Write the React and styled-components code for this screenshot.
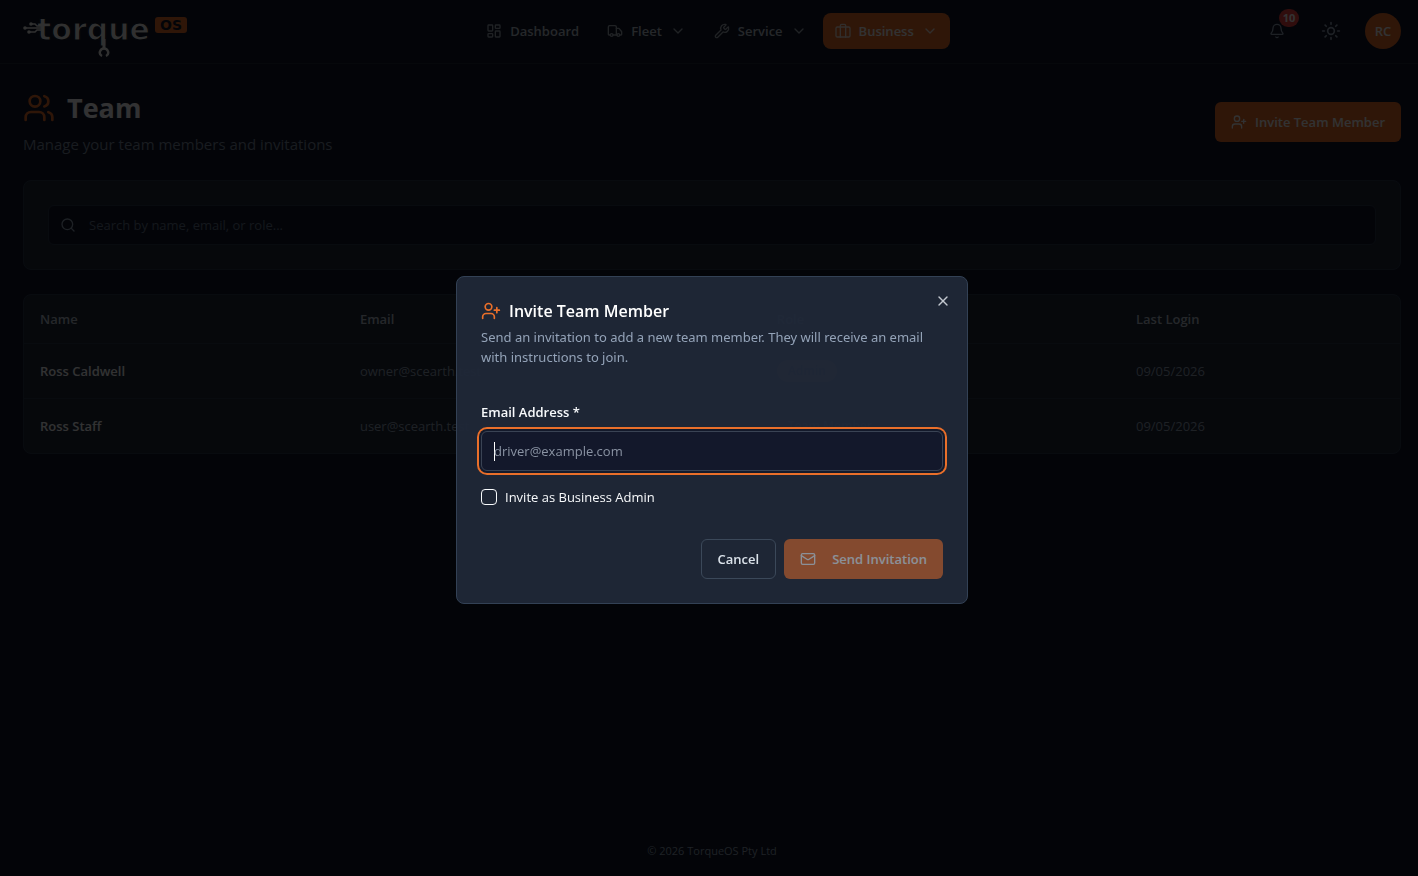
import React, { useState } from 'react'
import styled, { createGlobalStyle, ThemeProvider } from 'styled-components'
import {
  Bell,
  ChevronDown,
  LayoutDashboard,
  Mail,
  Search,
  Sun,
  Truck,
  UserPlus,
  Users,
  Wrench,
  X
} from 'lucide-react'

const theme = {
  page: '#0f172a',
  card: '#1e293b',
  line: '#2c394d',
  orange: '#ea6f2a',
  text: '#f8fafc',
  soft: '#b9c2cf',
  muted: '#94a3b8',
  dim: '#7c8a9f'
}

const GlobalStyle = createGlobalStyle`
  * {
    box-sizing: border-box;
  }
  body {
    margin: 0;
    background: ${ theme.page };
    color: ${ theme.text };
    font-family: 'Open Sans', 'Noto Sans', sans-serif;
    font-size: 13px;
    line-height: 20px;
  }
  button, input {
    font: inherit;
    color: inherit;
  }
  button {
    cursor: pointer;
  }
`

const PageWrapper = styled.div`
  display: flex;
  flex-direction: column;
  min-height: 100vh;
`

const HeaderWrapper = styled.header`
  display: grid;
  grid-template-columns: 1fr auto 1fr;
  align-items: center;
  height: 64px;
  padding: 0 17px 2px 23px;
  border-bottom: 1px solid ${ props => props.theme.card };
`

const LogoLink = styled.a`
  display: flex;
  width: 168px;
  svg {
    display: block;
  }
`

const NavWrapper = styled.nav`
  display: flex;
  gap: 4px;
`

const NavButton = styled.button`
  display: flex;
  align-items: center;
  gap: 8px;
  height: 36px;
  padding: 0 12px;
  border: 0;
  border-radius: 8px;
  font-weight: 600;
  color: ${ props => props.$active ? props.theme.text : props.theme.soft };
  background: ${ props => props.$active ? props.theme.orange : 'transparent' };
  svg {
    opacity: 0.85;
  }
`

const HeaderActions = styled.div`
  display: flex;
  justify-content: flex-end;
  align-items: center;
  gap: 14px;
`

const IconButton = styled.button`
  position: relative;
  display: flex;
  align-items: center;
  justify-content: center;
  width: 40px;
  height: 40px;
  padding: 0;
  border: 0;
  background: none;
  color: ${ props => props.theme.muted };
`

const CountBadge = styled.span`
  position: absolute;
  top: -2px;
  right: -2px;
  width: 20px;
  height: 18px;
  border-radius: 9px;
  background: #ef4444;
  color: #fff;
  font-size: 11px;
  font-weight: 700;
  line-height: 18px;
`

const Avatar = styled.button`
  width: 36px;
  height: 36px;
  padding: 0;
  border: 0;
  border-radius: 50%;
  background: ${ props => props.theme.orange };
  color: ${ props => props.theme.text };
  font-weight: 600;
`

const MainWrapper = styled.main`
  display: flex;
  flex-direction: column;
  flex: 1;
  gap: 24px;
  padding: 24px 17px 24px 23px;
`

const TitleRow = styled.div`
  display: flex;
  align-items: center;
  justify-content: space-between;
`

const PageTitle = styled.h1`
  display: flex;
  align-items: center;
  gap: 12px;
  margin: 0 0 4px;
  font-size: 27px;
  font-weight: 700;
  line-height: 40px;
  svg {
    color: ${ props => props.theme.orange };
  }
`

const SubTitle = styled.p`
  margin: 0;
  font-size: 15px;
  line-height: 24px;
  color: ${ props => props.theme.dim };
`

const ActionButton = styled.button`
  display: flex;
  align-items: center;
  justify-content: center;
  gap: ${ props => props.$wide ? '16px' : '8px' };
  height: 40px;
  padding: 0 16px;
  border: ${ props => props.$outline ? '1px solid #3b4859' : '0' };
  border-radius: 6px;
  background: ${ props => props.$outline ? 'transparent' : props.theme.orange };
  color: ${ props => props.$outline ? '#dbe2ea' : props.theme.text };
  font-weight: 600;
  &:disabled {
    opacity: 0.5;
    cursor: default;
  }
`

const Card = styled.section`
  padding: ${ props => props.$padding || '0' };
  border: 1px solid ${ props => props.theme.line };
  border-radius: 8px;
  background: ${ props => props.theme.card };
`

const SearchBox = styled.label`
  display: flex;
  align-items: center;
  gap: 13px;
  height: 40px;
  padding: 0 11px;
  border: 1px solid ${ props => props.theme.line };
  border-radius: 6px;
  background: ${ props => props.theme.page };
  color: ${ props => props.theme.muted };
  input {
    flex: 1;
    padding: 0;
    border: 0;
    outline: 0;
    background: none;
    &::placeholder {
      color: #64748b;
      opacity: 1;
    }
  }
`

const Table = styled.table`
  width: 100%;
  table-layout: fixed;
  border-collapse: collapse;
  th, td {
    padding: 0 16px;
    text-align: left;
  }
  th {
    height: 48px;
    font-weight: 600;
    color: ${ props => props.theme.soft };
  }
  td {
    height: 55px;
    border-top: 1px solid ${ props => props.theme.line };
    color: ${ props => props.theme.muted };
  }
  td:first-child {
    font-weight: 600;
    color: ${ props => props.theme.text };
  }
`

const Col = styled.col`
  width: ${ props => props.$width };
`

const RoleBadge = styled.span`
  display: inline-block;
  padding: 0 10px;
  border: 1px solid transparent;
  border-radius: 11px;
  font-size: 12px;
  font-weight: 600;
  background: ${ props => props.$filled ? props.theme.orange : 'transparent' };
  color: ${ props => props.$filled ? props.theme.page : props.theme.soft };
`

const FooterWrapper = styled.footer`
  padding: 0 17px 17px 23px;
  text-align: center;
  font-size: 11px;
  line-height: 16px;
  color: ${ props => props.theme.muted };
`

const Overlay = styled.div`
  position: fixed;
  inset: 0;
  display: flex;
  align-items: center;
  justify-content: center;
  padding: 24px 17px 20px 23px;
  background: rgba(0, 0, 0, 0.8);
`

const DialogWrapper = styled.form`
  position: relative;
  width: 100%;
  max-width: 512px;
  padding: 24px;
  border: 1px solid #334155;
  border-radius: 8px;
  background: rgba(32, 40, 56, 0.95);
`

const DialogTitle = styled.h2`
  display: flex;
  align-items: center;
  gap: 8px;
  margin: 0 0 6px;
  font-size: 16px;
  font-weight: 600;
  line-height: 20px;
  color: #fff;
  svg {
    color: ${ props => props.theme.orange };
  }
`

const DialogText = styled.p`
  margin: 0 0 35px;
  font-family: 'Noto Sans', sans-serif;
  color: ${ props => props.theme.muted };
`

const CloseButton = styled.button`
  position: absolute;
  top: 16px;
  right: 16px;
  display: flex;
  padding: 0;
  border: 0;
  background: none;
  color: #c3c8d0;
`

const FieldLabel = styled.label`
  display: block;
  margin-bottom: 9px;
  font-weight: 600;
`

const FieldInput = styled.input`
  display: block;
  width: 100%;
  height: 40px;
  padding: 0 12px;
  border: 1px solid #3a4354;
  border-radius: 6px;
  outline: 0;
  background: #13182b;
  caret-color: #fff;
  &::placeholder {
    color: #8a93a3;
    opacity: 1;
  }
  &:focus {
    box-shadow: 0 0 0 2px #141a2b, 0 0 0 4px ${ props => props.theme.orange };
  }
  /* steady caret while the field is still empty */
  &:focus:placeholder-shown {
    caret-color: transparent;
    background: linear-gradient(#fff, #fff) 12px center / 1px 19px no-repeat #13182b;
  }
`

const CheckLabel = styled.label`
  display: flex;
  align-items: center;
  gap: 8px;
  margin: 16px 0 32px;
  input {
    appearance: none;
    width: 16px;
    height: 16px;
    margin: 0;
    border: 1px solid #f8fafc;
    border-radius: 4px;
    &:checked {
      background: ${ props => props.theme.orange };
    }
  }
`

const DialogActions = styled.div`
  display: flex;
  justify-content: flex-end;
  gap: 8px;
`

const LogoText = styled.text`
  font-family: 'DejaVu Sans', sans-serif;
  font-size: ${ props => props.$small ? '14px' : '30px' };
  font-weight: 700;
`

const navItems = [
  { name: 'Dashboard', icon: LayoutDashboard },
  { name: 'Fleet', icon: Truck, menu: true },
  { name: 'Service', icon: Wrench, menu: true },
  { name: 'Business', icon: BusinessIcon, menu: true, active: true }
]

const members = [
  { name: 'Ross Caldwell', email: 'owner@scearth.test', role: 'Admin', login: '09/05/2026' },
  { name: 'Ross Staff', email: 'user@scearth.test', role: 'Team Member', login: '09/05/2026' }
]

function BusinessIcon({ size }) {
  return (
    <svg width={size} height={size} viewBox='0 0 24 24' fill='none' stroke='currentColor' strokeWidth='2' strokeLinecap='round' strokeLinejoin='round'>
      <rect x='1.5' y='6' width='21' height='15' rx='2' />
      <path d='M8 21V4a2 2 0 0 1 2-2h4a2 2 0 0 1 2 2v17' />
    </svg>
  )
}

function Logo() {
  return (
    <svg width='168' height='52' viewBox='0 0 168 52' role='img' aria-label='torque OS'>
      <LogoText x='14' y='35' fill='#f1f1f1' stroke={theme.page} strokeWidth='1.2'>torque</LogoText>
      <g fill='none' stroke='#f1f1f1' strokeWidth='1.5'>
        <path d='M8 19h4l2 2h4M2 23h16M6 27h6l2-2h4' />
        <path d='M81 34v10' strokeWidth='3' />
        <path d='M79 51c-2-1-2.500-3-2-4.500.6-2 2.200-3 4-3s3.400 1 4 3c.5 1.500 0 3.500-2 4.500' strokeWidth='2.4' />
      </g>
      <g fill='#f1f1f1'>
        <circle cx='8' cy='19' r='1.8' />
        <circle cx='2' cy='23' r='1.8' />
        <circle cx='6' cy='27' r='1.8' />
      </g>
      <rect x='132' y='12' width='32' height='16' rx='3' fill={theme.orange} />
      <LogoText $small x='148' y='25' textAnchor='middle' fill={theme.page}>OS</LogoText>
    </svg>
  )
}

function Header() {
  return (
    <HeaderWrapper>
      <LogoLink href='#'><Logo /></LogoLink>
      <NavWrapper>
        {navItems.map(item => (
          <NavButton key={item.name} type='button' $active={item.active}>
            <item.icon size={16} />
            {item.name}
            {item.menu && <ChevronDown size={16} />}
          </NavButton>
        ))}
      </NavWrapper>
      <HeaderActions>
        <IconButton type='button' aria-label='Notifications'>
          <Bell size={16} />
          <CountBadge>10</CountBadge>
        </IconButton>
        <IconButton type='button' aria-label='Toggle theme'>
          <Sun size={20} />
        </IconButton>
        <Avatar type='button'>RC</Avatar>
      </HeaderActions>
    </HeaderWrapper>
  )
}

function MemberTable() {
  return (
    <Card>
      <Table>
        <colgroup>
          <Col $width='23.250%' />
          <Col $width='30.300%' />
          <Col $width='26.100%' />
          <Col />
        </colgroup>
        <thead>
          <tr>
            <th>Name</th>
            <th>Email</th>
            <th>Role</th>
            <th>Last Login</th>
          </tr>
        </thead>
        <tbody>
          {members.map(item => (
            <tr key={item.email}>
              <td>{item.name}</td>
              <td>{item.email}</td>
              <td><RoleBadge $filled={item.role === 'Admin'}>{item.role}</RoleBadge></td>
              <td>{item.login}</td>
            </tr>
          ))}
        </tbody>
      </Table>
    </Card>
  )
}

function InviteDialog({ onClose }) {
  const [email, setEmail] = useState('')

  return (
    <Overlay>
      <DialogWrapper role='dialog' aria-modal='true' aria-labelledby='invite-title' onSubmit={e => e.preventDefault()}>
        <DialogTitle id='invite-title'>
          <UserPlus size={20} />
          Invite Team Member
        </DialogTitle>
        <DialogText>
          Send an invitation to add a new team member. They will receive an email with instructions to join.
        </DialogText>
        <FieldLabel htmlFor='invite-email'>Email Address *</FieldLabel>
        <FieldInput
          id='invite-email'
          type='email'
          placeholder='driver@example.com'
          value={email}
          onChange={e => setEmail(e.target.value)}
          autoFocus
        />
        <CheckLabel>
          <input type='checkbox' />
          Invite as Business Admin
        </CheckLabel>
        <DialogActions>
          <ActionButton type='button' $outline onClick={onClose}>Cancel</ActionButton>
          <ActionButton type='submit' $wide disabled={!email}>
            <Mail size={16} />
            Send Invitation
          </ActionButton>
        </DialogActions>
        <CloseButton type='button' aria-label='Close' onClick={onClose}>
          <X size={16} />
        </CloseButton>
      </DialogWrapper>
    </Overlay>
  )
}

export default function App() {
  const [open, setOpen] = useState(true)

  return (
    <ThemeProvider theme={theme}>
      <GlobalStyle />
      <PageWrapper>
        <Header />
        <MainWrapper>
          <TitleRow>
            <div>
              <PageTitle><Users size={32} />Team</PageTitle>
              <SubTitle>Manage your team members and invitations</SubTitle>
            </div>
            <ActionButton type='button' onClick={() => setOpen(true)}>
              <UserPlus size={16} />
              Invite Team Member
            </ActionButton>
          </TitleRow>
          <Card $padding='24px'>
            <SearchBox>
              <Search size={16} />
              <input type='text' aria-label='Search team' placeholder='Search by name, email, or role...' />
            </SearchBox>
          </Card>
          <MemberTable />
        </MainWrapper>
        <FooterWrapper>© 2026 TorqueOS Pty Ltd</FooterWrapper>
      </PageWrapper>
      {open && <InviteDialog onClose={() => setOpen(false)} />}
    </ThemeProvider>
  )
}
